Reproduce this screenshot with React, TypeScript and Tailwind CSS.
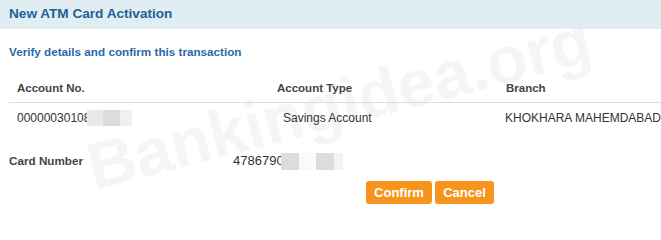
import React from "react";

export default function App() {
  return (
    <div className="relative w-[661px] h-[220px] overflow-hidden bg-white font-['Liberation_Sans',Arial,sans-serif]">
      <div className="pointer-events-none absolute left-[95px] top-[134px] origin-[0_58px] -rotate-[14.5deg] whitespace-nowrap text-[66px] font-bold leading-none text-[#f5f5f5]">
        Bankingidea.org
      </div>
      <div className="relative">
        <div className="flex h-[29px] items-center bg-[#e0eef3] pl-[9px]">
          <span className="-mt-[1px] text-[13.6px] font-bold text-[#1f5f99]">New ATM Card Activation</span>
        </div>
        <div className="mt-[15px] h-[16px] pl-[9px] text-[11.7px] font-bold leading-[16px] text-[#2b6aa6]">
          Verify details and confirm this transaction
        </div>
        <div className="ml-[9px] mt-[15px] flex h-[28px] items-center border-b border-[#dddddd] text-[11.5px] font-bold text-[#444444]">
          <div className="w-[268px] pl-[8px]">Account No.</div>
          <div className="w-[229px]">Account Type</div>
          <div>Branch</div>
        </div>
        <div className="ml-[9px] flex h-[28px] items-center pt-[2px] text-[12px] text-[#333333]">
          <div className="flex w-[274px] items-center pl-[8px]">
            <span>00000030108</span>
            <span className="-ml-[3px] flex h-[16px]">
              <span className="w-[16px] bg-[#e9e9e9]" />
              <span className="w-[17px] bg-[#dcdcdc]" />
              <span className="w-[12px] bg-[#f0f0f0]" />
            </span>
          </div>
          <div className="w-[222px]">Savings Account</div>
          <div className="whitespace-nowrap">KHOKHARA MAHEMDABAD</div>
        </div>
        <div className="mt-[16px] flex h-[28px] items-center pl-[9px]">
          <div className="w-[224px] text-[11.7px] font-bold text-[#444444]">Card Number</div>
          <div className="flex items-center text-[13px] text-[#333333]">
            <span>4786790</span>
            <span className="-ml-[3px] flex h-[17px]">
              <span className="w-[18px] bg-[#dcdcdc]" />
              <span className="w-[17px] bg-[#fafafa]" />
              <span className="w-[18px] bg-[#dcdcdc]" />
              <span className="w-[9px] bg-[#f3f3f3]" />
            </span>
          </div>
        </div>
        <div className="ml-[366px] mt-[6px] flex gap-[3px]">
          <button className="flex h-[23px] w-[66px] items-center justify-center rounded-[3px] bg-[#f7941d] text-[13px] font-bold text-white">
            Confirm
          </button>
          <button className="flex h-[23px] w-[59px] items-center justify-center rounded-[3px] bg-[#f7941d] text-[13px] font-bold text-white">
            Cancel
          </button>
        </div>
      </div>
    </div>
  );
}
